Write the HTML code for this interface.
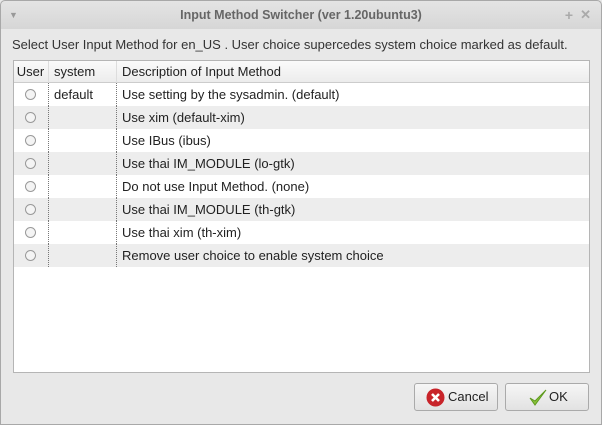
<!DOCTYPE html>
<html><head><style>
body{margin:0;width:602px;height:425px;overflow:hidden;background:#e8e8e8;font-family:"Liberation Sans",sans-serif;font-size:13px;color:#222;position:relative}
.title{position:absolute;left:0;top:0;width:600px;height:28px;background:linear-gradient(#e4e4e4,#d6d6d6);border:1px solid #a8a8a8;border-bottom:none;border-radius:5px 5px 0 0;text-align:center;line-height:28px;font-weight:bold;color:#666;font-size:12.5px}
.win{position:absolute;left:0;top:28px;width:600px;height:396px;border:1px solid #a8a8a8;border-top:none}
.lbl{position:absolute;left:12px;top:37px;font-size:13px;color:#333}
.tbl{position:absolute;left:13px;top:60px;width:575px;height:311px;border:1px solid #b5b5b5;background:#fff}
.row{position:absolute;left:0;width:575px;height:23px;line-height:23px}
.g{background:#ededed}
.c1{position:absolute;left:0;width:33px;text-align:center}
.c2{position:absolute;left:34px;width:66px;padding-left:5px;border-left:1px dotted #777;height:23px}
.c3{position:absolute;left:102px;padding-left:5px;border-left:1px dotted #777;height:23px}
.hdr .c2,.hdr .c3{border-left:1px solid #ddd}
.hdr{background:linear-gradient(#fafafa,#ececec);height:21px;line-height:21px;border-bottom:1px solid #ccc}
.rad{display:inline-block;width:9px;height:9px;border:1px solid #999;border-radius:50%;background:#f4f4f4;vertical-align:middle;margin-top:-2px}
.btn{position:absolute;top:383px;height:26px;border:1px solid #aaa;border-radius:3px;background:linear-gradient(#f6f6f6,#e2e2e2);line-height:26px;font-size:13px}
</style></head><body>
<div class="title"><span style="position:absolute;left:8px;font-size:9px;color:#999">▼</span>Input Method Switcher (ver 1.20ubuntu3)<span style="position:absolute;right:28px;color:#aaa;font-size:14px">+</span><span style="position:absolute;right:10px;color:#aaa;font-size:13px">✕</span></div>
<div class="win"></div>
<div class="lbl">Select User Input Method for en_US . User choice supercedes system choice marked as default.</div>
<div class="tbl">
<div class="row hdr" style="top:0"><div class="c1">User</div><div class="c2">system</div><div class="c3">Description of Input Method</div></div>
<div class="row" style="top:22px"><div class="c1"><span class="rad"></span></div><div class="c2">default</div><div class="c3">Use setting by the sysadmin. (default)</div></div>
<div class="row g" style="top:45px"><div class="c1"><span class="rad"></span></div><div class="c2"></div><div class="c3">Use xim (default-xim)</div></div>
<div class="row" style="top:68px"><div class="c1"><span class="rad"></span></div><div class="c2"></div><div class="c3">Use IBus (ibus)</div></div>
<div class="row g" style="top:91px"><div class="c1"><span class="rad"></span></div><div class="c2"></div><div class="c3">Use thai IM_MODULE (lo-gtk)</div></div>
<div class="row" style="top:114px"><div class="c1"><span class="rad"></span></div><div class="c2"></div><div class="c3">Do not use Input Method. (none)</div></div>
<div class="row g" style="top:137px"><div class="c1"><span class="rad"></span></div><div class="c2"></div><div class="c3">Use thai IM_MODULE (th-gtk)</div></div>
<div class="row" style="top:160px"><div class="c1"><span class="rad"></span></div><div class="c2"></div><div class="c3">Use thai xim (th-xim)</div></div>
<div class="row g" style="top:183px"><div class="c1"><span class="rad"></span></div><div class="c2"></div><div class="c3">Remove user choice to enable system choice</div></div>
</div>
<div class="btn" style="left:414px;width:82px"><svg style="position:absolute;left:11px;top:4px" width="19" height="19"><circle cx="9.5" cy="9.5" r="9" fill="#c8242a"/><path d="M6 6L13 13M13 6L6 13" stroke="#fff" stroke-width="2.6"/></svg><span style="position:absolute;left:33px">Cancel</span></div>
<div class="btn" style="left:505px;width:82px"><svg style="position:absolute;left:22px;top:4px" width="20" height="19"><path d="M2 10L7 17L18 2L7 13Z" fill="#8ac23a" stroke="#5e9a1e" stroke-width="1"/></svg><span style="position:absolute;left:43px">OK</span></div>
</body></html>
